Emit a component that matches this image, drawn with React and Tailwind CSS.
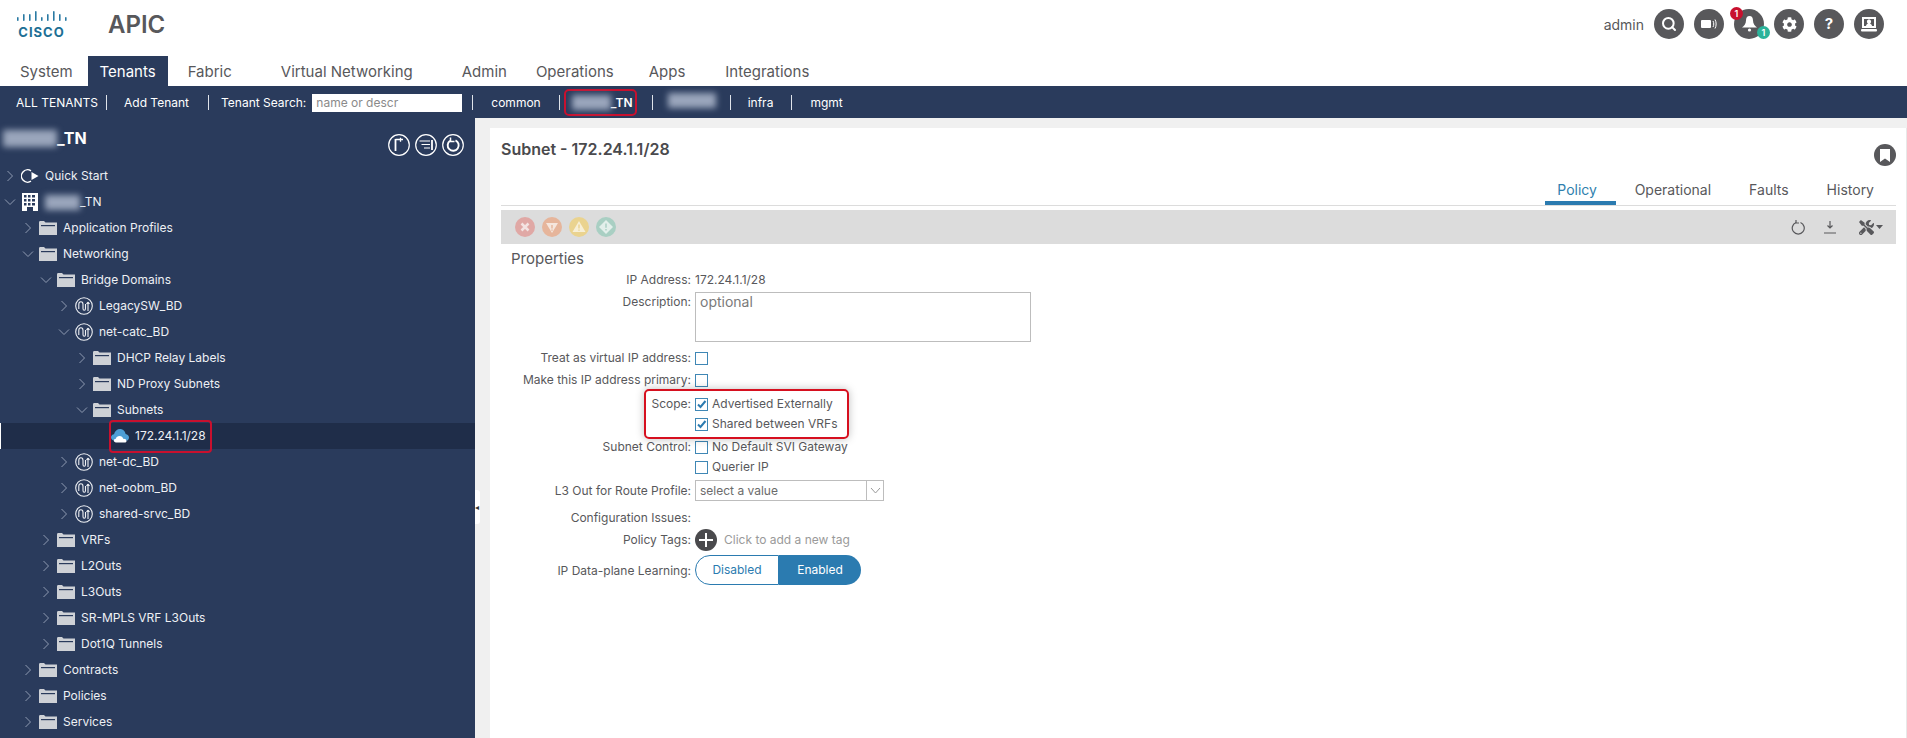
import React from "react";
import { Search } from "lucide-react";
import { FaCog, FaTools } from "react-icons/fa";

const font = { fontFamily: "Inter, sans-serif" };

const CiscoLogo = () => (
  <div className="flex flex-col items-center w-[53px] -mt-[7px]">
    <svg width="50" height="10" viewBox="0 0 50 10">
      {[[1,6,4],[7,3,7],[13,3,7],[19,0,10],[25,6,4],[31,3,7],[37,0,10],[43,3,7],[49,6,4]].map(([x, y, h], i) => (
        <rect key={i} x={x - 1} y={y} width="1.6" height={h} rx="0.8" fill="#2a7aa3" />
      ))}
    </svg>
    <span className="text-[13px] leading-[13px] font-bold tracking-[1px] text-[#1d6f95] mt-[5px]">CISCO</span>
  </div>
);

const HeaderCircle = ({ children, badge }) => (
  <div className="relative w-[30px] h-[30px] rounded-full bg-[#58585b] flex items-center justify-center text-white">
    {children}
    {badge}
  </div>
);

const Sep = () => <span className="block w-[1px] h-[15px] bg-[#dfe3ea]" />;

const Blur = ({ className }) => <span className={`inline-block h-[15px] bg-[#9aa6bc] blur-[3px] ${className}`} />;

const Chevron = ({ open }) => (
  <svg width="12" height="12" viewBox="0 0 12 12" fill="none" stroke="#8f9bb2" strokeWidth="1">
    {open ? <path d="M1 3.5 6 8.500 11 3.500" /> : <path d="M3.500 1 8.500 6 3.500 11" />}
  </svg>
);

const Folder = () => (
  <svg width="18" height="14" viewBox="0 0 18 14">
    <path d="M0 1.500C0 .7.5 0 1.200 0H5l1.500 1.500H18V14H0Z" fill="#ced1d6" />
    <rect x="2" y="4" width="14" height="1.200" fill="#2a3b5c" />
  </svg>
);

const BdIcon = () => (
  <svg width="18" height="18" viewBox="0 0 18 18" fill="none" stroke="#eef0f4" strokeWidth="1.100">
    <circle cx="9" cy="9" r="8.300" />
    <path d="M3.800 12V7.500C3.800 3.800 8 3.800 8 7.500V11.500C8 13.800 10.500 13.800 10.500 11.500V7" />
    <path d="M13 14V5M13 5l-1.500 2M13 5l1.500 2" />
  </svg>
);

const CloudIcon = () => (
  <svg width="18" height="14" viewBox="0 0 18 14">
    <path d="M3.500 11.500C1.200 11.500 0 9.900 0 8.300 0 6.600 1.300 5.300 3 5.200 3.800 2 6.200 0 9 0c3 0 5.200 2.200 5.600 5 2 .2 3.400 1.700 3.400 3.500 0 1.200-.6 2.200-1.500 3Z" fill="#4d9ed6" />
    <path d="M5 13.500c-1.300 0-2.200-.8-2.200-1.900 0-1 .9-1.900 2-1.900.5-1.600 1.900-2.700 3.700-2.700 1.900 0 3.400 1.200 3.800 2.900 1.500-.2 3.200.6 3.200 2 0 .9-.8 1.600-2 1.600Z" fill="#fff" />
  </svg>
);

const BuildingIcon = () => (
  <svg width="16" height="18" viewBox="0 0 16 18">
    <path fillRule="evenodd" fill="#fff" d="M0 0h16v18h-5v-4H5v4H0ZM2 2v2.500h2.500V2Zm4 0v2.500h2.500V2Zm4 0v2.500h3V2ZM2 6v2.500h2.500V6Zm4 0v2.500h2.500V6Zm4 0v2.500h3V6ZM2 10v2.500h2.500V10Zm4 0v2.500h2.500V10Zm4 0v2.500h3V10Z" />
  </svg>
);

const QuickIcon = () => (
  <svg width="18" height="14" viewBox="0 0 18 14" fill="none">
    <path d="M10 1.800A6.200 6.200 0 1 0 10 12.200" stroke="#fff" strokeWidth="1.400" />
    <path d="M10.500 3 17.500 7 10.500 11Z" fill="#fff" />
  </svg>
);

const TREE = [
  { level: 0, label: "Quick Start", icon: "quick", chev: "closed" },
  { level: 0, label: "_TN", icon: "tenant", chev: "open", blur: true },
  { level: 1, label: "Application Profiles", icon: "folder", chev: "closed" },
  { level: 1, label: "Networking", icon: "folder", chev: "open" },
  { level: 2, label: "Bridge Domains", icon: "folder", chev: "open" },
  { level: 3, label: "LegacySW_BD", icon: "bd", chev: "closed" },
  { level: 3, label: "net-catc_BD", icon: "bd", chev: "open" },
  { level: 4, label: "DHCP Relay Labels", icon: "folder", chev: "closed" },
  { level: 4, label: "ND Proxy Subnets", icon: "folder", chev: "closed" },
  { level: 4, label: "Subnets", icon: "folder", chev: "open" },
  { level: 5, label: "172.24.1.1/28", icon: "cloud", selected: true },
  { level: 3, label: "net-dc_BD", icon: "bd", chev: "closed" },
  { level: 3, label: "net-oobm_BD", icon: "bd", chev: "closed" },
  { level: 3, label: "shared-srvc_BD", icon: "bd", chev: "closed" },
  { level: 2, label: "VRFs", icon: "folder", chev: "closed" },
  { level: 2, label: "L2Outs", icon: "folder", chev: "closed" },
  { level: 2, label: "L3Outs", icon: "folder", chev: "closed" },
  { level: 2, label: "SR-MPLS VRF L3Outs", icon: "folder", chev: "closed" },
  { level: 2, label: "Dot1Q Tunnels", icon: "folder", chev: "closed" },
  { level: 1, label: "Contracts", icon: "folder", chev: "closed" },
  { level: 1, label: "Policies", icon: "folder", chev: "closed" },
  { level: 1, label: "Services", icon: "folder", chev: "closed" },
];

const INDENT = ["pl-[4px]", "pl-[22px]", "pl-[40px]", "pl-[58px]", "pl-[76px]", "pl-[94px]"];

const TreeRow = ({ row }) => (
  <div className={`relative flex items-center h-[26px] shrink-0 ${INDENT[row.level]} ${row.selected ? "bg-[#1f2d49]" : ""}`}>
    {row.selected && <span className="absolute left-0 top-0 w-[1px] h-full bg-white" />}
    <span className="w-[12px] flex justify-center mr-[5px]">{row.chev && <Chevron open={row.chev === "open"} />}</span>
    <span className="w-[18px] flex justify-center mr-[6px]">
      {row.icon === "folder" && <Folder />}
      {row.icon === "bd" && <BdIcon />}
      {row.icon === "cloud" && <CloudIcon />}
      {row.icon === "tenant" && <BuildingIcon />}
      {row.icon === "quick" && <QuickIcon />}
    </span>
    {row.blur && <Blur className="w-[35px]" />}
    <span className="text-[12px] text-[#eef0f4]">{row.label}</span>
    {row.selected && <span className="absolute left-[109px] top-[-3px] w-[103px] h-[33px] border-2 border-[#c8102e] rounded-[4px]" />}
  </div>
);

const Row = ({ label, className, children, labelClass = "" }) => (
  <div className={`flex ${className}`}>
    <span className={`w-[180px] text-right text-[12px] leading-[20px] text-[#58585b] shrink-0 mr-[4px] ${labelClass}`}>{label}</span>
    {children}
  </div>
);

const Check = ({ on }) => (
  <span className="w-[13px] h-[13px] border border-[#3f87b5] bg-white flex items-center justify-center shrink-0">
    {on && (
      <svg width="11" height="11" viewBox="0 0 11 11" fill="none" stroke="#2b7bb0" strokeWidth="2">
        <path d="M2 5.500 4.500 8 9.500 2" />
      </svg>
    )}
  </span>
);

const CheckLine = ({ on, label }) => (
  <div className="flex items-center h-[20px] text-[12px] text-[#58585b]">
    <Check on={on} />
    <span className="ml-[4px]">{label}</span>
  </div>
);

const FaultIcon = ({ color, children }) => (
  <svg width="20" height="20" viewBox="0 0 20 20">
    <circle cx="10" cy="10" r="10" fill={color} />
    {children}
  </svg>
);

const TreeButton = ({ children }) => (
  <svg width="22" height="22" viewBox="0 0 22 22" fill="none" stroke="#fff" strokeWidth="1.200">
    <circle cx="11" cy="11" r="10.300" />
    {children}
  </svg>
);

const NAV_TABS = [
  { label: "System", cls: "ml-[20px]" },
  { label: "Tenants", cls: "ml-[15px] w-[80px] justify-center bg-[#2a3b5c] text-white" },
  { label: "Fabric", cls: "ml-[20px]" },
  { label: "Virtual Networking", cls: "ml-[49px]" },
  { label: "Admin", cls: "ml-[49px]" },
  { label: "Operations", cls: "ml-[29px]" },
  { label: "Apps", cls: "ml-[35px]" },
  { label: "Integrations", cls: "ml-[40px]" },
];

export default function App() {
  return (
    <div className="w-[1907px] h-[738px] overflow-hidden flex flex-col bg-[#f0f0f0] text-[#58585b]" style={font}>
      {/* top header */}
      <div className="h-[56px] bg-white flex items-center shrink-0 pl-[15px] pr-[23px]">
        <CiscoLogo />
        <span className="ml-[40px] text-[24px] font-semibold text-[#58585b] -mt-[6px]">APIC</span>
        <span className="ml-auto text-[14px] mr-[10px] -mt-[8px]">admin</span>
        <div className="flex gap-[10px] -mt-[8px]">
          <HeaderCircle><Search size={16} strokeWidth={3} /></HeaderCircle>
          <HeaderCircle>
            <svg width="16" height="12" viewBox="0 0 16 12" fill="#fff"><rect x="0" y="2" width="10" height="8" rx="1" /><path d="M12 3c1 1.500 1 4.500 0 6M14 1.500c1.500 2.500 1.500 6.500 0 9" stroke="#fff" fill="none" /></svg>
          </HeaderCircle>
          <HeaderCircle
            badge={
              <>
                <span className="absolute -top-[2px] -left-[4px] w-[13px] h-[13px] rounded-full bg-[#c8102e] text-[9px] leading-[13px] text-center font-semibold">1</span>
                <span className="absolute bottom-[0px] -right-[6px] w-[13px] h-[13px] rounded-full bg-[#2bb39a] text-[9px] leading-[13px] text-center font-semibold">1</span>
              </>
            }
          >
            <svg width="15" height="16" viewBox="0 0 15 16" fill="#fff"><path d="M7.500 0C10 0 11 2 11 4.500 11 8 13 10 15 11.500H0C2 10 4 8 4 4.500 4 2 5 0 7.500 0Z" /><circle cx="7.500" cy="14" r="1.600" /></svg>
          </HeaderCircle>
          <HeaderCircle><FaCog size={15} /></HeaderCircle>
          <HeaderCircle><span className="text-[15px] font-bold">?</span></HeaderCircle>
          <HeaderCircle>
            <svg width="16" height="15" viewBox="0 0 16 15" fill="#fff"><path fillRule="evenodd" d="M1 0h14v11H1ZM3 2v7h2c0-1 1-2 2-2.500C6 6 5.800 5 6 4c.3-1 1-1.500 2-1.500S9.700 3 10 4c.2 1 0 2-1 2.500 1 .5 2 1.500 2 2.500h2V2Z" /><rect x="0" y="12" width="16" height="2.500" rx="1" /></svg>
          </HeaderCircle>
        </div>
      </div>

      {/* main tabs */}
      <div className="h-[30px] bg-white flex shrink-0 text-[15px]">
        {NAV_TABS.map((t) => (
          <div key={t.label} className={`flex items-center h-full pt-[3px] ${t.cls}`}>{t.label}</div>
        ))}
      </div>

      {/* tenant bar */}
      <div className="h-[32px] bg-[#2a3b5c] text-white text-[12px] flex items-center shrink-0 pl-[16px] pt-[1px]">
        <span>ALL TENANTS</span>
        <span className="ml-[8px]"><Sep /></span>
        <span className="ml-[17px]">Add Tenant</span>
        <span className="ml-[19px]"><Sep /></span>
        <span className="ml-[12px]">Tenant Search:</span>
        <input placeholder="name or descr" className="ml-[6px] w-[150px] h-[18px] bg-white px-[4px] text-[12px] placeholder:text-[#8a8a8a]" />
        <span className="ml-[10px]"><Sep /></span>
        <span className="ml-[18px]">common</span>
        <span className="ml-[18px]"><Sep /></span>
        <div className="relative ml-[4px] w-[73px] h-[27px] border-2 border-[#c8102e] rounded-[5px] flex items-center pl-[6px] font-semibold">
          <Blur className="w-[39px]" />
          <span>_TN</span>
        </div>
        <span className="ml-[15px]"><Sep /></span>
        <span className="ml-[15px]"><Blur className="w-[48px]" /></span>
        <span className="ml-[14px]"><Sep /></span>
        <span className="ml-[17px]">infra</span>
        <span className="ml-[18px]"><Sep /></span>
        <span className="ml-[18px]">mgmt</span>
      </div>

      <div className="flex-1 flex min-h-0">
        {/* left tree panel */}
        <div className="relative w-[475px] bg-[#2a3b5c] shrink-0 flex flex-col">
          <div className="h-[47px] flex items-start justify-between shrink-0 pl-[3px] pr-[11px]">
            <div className="flex items-center h-[40px] text-[16px] font-bold text-white">
              <Blur className="w-[54px] h-[17px]" />
              <span>_TN</span>
            </div>
            <div className="flex gap-[5px] mt-[16px]">
              <TreeButton><path d="M7.500 5V17" strokeWidth="1.800" /><path d="M7.500 5.500H15M12.500 3.800V7.800" strokeWidth="1.300" /></TreeButton>
              <TreeButton><path d="M4.500 7H15M6.500 10.500H15M9 14H15" /><path d="M17 6V16" strokeWidth="1.800" /></TreeButton>
              <TreeButton><path d="M8 6.800A5.500 5.500 0 1 0 13.500 6.300" strokeWidth="1.900" /><path d="M8.500 3.500V7.500H12.500" strokeWidth="1.500" /></TreeButton>
            </div>
          </div>
          <div className="flex flex-col mt-[-2px]">
            {TREE.map((row, i) => <TreeRow key={i} row={row} />)}
          </div>
          <span className="absolute right-[-5px] top-[372px] w-[5px] h-[34px] bg-white rounded-r-[3px] text-[8px] leading-[34px] text-[#333]">◂</span>
        </div>

        {/* right panel */}
        <div className="flex-1 flex flex-col bg-white ml-[15px] mt-[10px] pl-[11px] pr-[10px] border-r border-[#e8e8e8] min-w-0">
          <div className="relative h-[78px] border-b border-[#dcdcdc] shrink-0">
            <div className="text-[16px] font-semibold text-[#4a4a4d] pt-[9px]">Subnet - 172.24.1.1/28</div>
            <span className="absolute right-0 top-[16px] w-[22px] h-[22px] rounded-full bg-[#58585b] flex items-center justify-center">
              <svg width="10" height="13" viewBox="0 0 10 13" fill="#fff"><path d="M0 0h10v13L5 9.500 0 13Z" /></svg>
            </span>
            <div className="absolute right-[22px] bottom-0 flex text-[14px] leading-[20px]">
              <span className="w-[71px] h-[31px] pt-[6px] pr-[6px] text-center text-[#2f7fae] border-b-[4px] border-[#2b7bb0]">Policy</span>
              <span className="ml-[19px] h-[31px] pt-[6px]">Operational</span>
              <span className="ml-[38px] h-[31px] pt-[6px]">Faults</span>
              <span className="ml-[38px] h-[31px] pt-[6px]">History</span>
            </div>
          </div>
          <div className="mt-[4px] h-[34px] bg-[#dcdcdc] flex items-center shrink-0 pl-[14px] pr-[13px]">
            <div className="flex gap-[7px]">
              <FaultIcon color="#e0a8a5"><path d="M6.500 6.500 13.500 13.500M13.500 6.500 6.500 13.500" stroke="#f3e3e2" strokeWidth="2.500" /></FaultIcon>
              <FaultIcon color="#e6b59b"><path d="M4 6H16L10 16Z" fill="#f5e6dd" /><path d="M10 8V11.500M10 12.500V13.800" stroke="#e6b59b" strokeWidth="1.400" /></FaultIcon>
              <FaultIcon color="#ead38f"><path d="M10 4 16.500 15H3.500Z" fill="#f7efd6" /><path d="M10 7.500V11.500M10 12.500V13.800" stroke="#ead38f" strokeWidth="1.400" /></FaultIcon>
              <FaultIcon color="#a9cfc3"><path d="M10 3 17 10 10 17 3 10Z" fill="#e3efeb" /><path d="M10 6.500V10.800M10 12V13.500" stroke="#a9cfc3" strokeWidth="1.400" /></FaultIcon>
            </div>
            <div className="ml-auto flex items-center">
              <svg width="14" height="15" viewBox="0 0 14 15" fill="none" stroke="#58585b" strokeWidth="1.200"><path d="M5 2.500A6 6 0 1 0 9.500 2.500" /><path d="M5 0V3H8" /></svg>
              <svg className="ml-[18px]" width="14" height="14" viewBox="0 0 14 14" fill="none" stroke="#58585b" strokeWidth="1.200"><path d="M7 1V8M4.500 5.500 7 8 9.500 5.500M1 13H13" /></svg>
              <span className="ml-[22px] flex items-center gap-[2px]">
                <FaTools size={15} color="#58585b" />
                <svg width="7" height="4" viewBox="0 0 7 4" fill="#58585b"><path d="M0 0h7L3.500 4Z" /></svg>
              </span>
            </div>
          </div>

          {/* properties form */}
          <div className="flex flex-col pl-[10px]">
            <div className="mt-[5px] h-[20px] text-[15px] leading-[20px]">Properties</div>
            <Row label="IP Address:" className="mt-[1px] h-[20px]"><span className="text-[12px] leading-[20px]">172.24.1.1/28</span></Row>
            <Row label="Description:" className="mt-[2px]">
              <textarea placeholder="optional" className="w-[336px] h-[50px] border border-[#bdbdbd] px-[4px] text-[14px] leading-[18px] resize-none placeholder:text-[#7a7a7a]" />
            </Row>
            <Row label="Treat as virtual IP address:" className="mt-[6px] h-[20px] items-center"><Check /></Row>
            <Row label="Make this IP address primary:" className="mt-[2px] h-[20px] items-center"><Check /></Row>
            <div className="relative">
              <Row label="Scope:" className="mt-[4px]">
                <div className="flex flex-col">
                  <CheckLine on label="Advertised Externally" />
                  <CheckLine on label="Shared between VRFs" />
                </div>
              </Row>
              <span className="absolute left-[133px] top-[-1px] w-[205px] h-[50px] border-2 border-[#d6101f] rounded-[5px] shadow-[0_0_8px_rgba(0,0,0,0.25)]" />
            </div>
            <Row label="Subnet Control:" className="mt-[3px]">
              <div className="flex flex-col">
                <CheckLine label="No Default SVI Gateway" />
                <CheckLine label="Querier IP" />
              </div>
            </Row>
            <Row label="L3 Out for Route Profile:" className="mt-[3px] h-[21px] items-center">
              <div className="w-[189px] h-[21px] border border-[#bdbdbd] flex items-center text-[12px] text-[#6b6b6b]">
                <span className="flex-1 px-[4px]">select a value</span>
                <span className="w-[17px] h-full border-l border-[#bdbdbd] flex items-center justify-center">
                  <svg width="11" height="7" viewBox="0 0 11 7" fill="none" stroke="#9a9a9a"><path d="M1 1 5.500 6 10 1" /></svg>
                </span>
              </div>
            </Row>
            <Row label="Configuration Issues:" className="mt-[7px] h-[20px]" />
            <Row label="Policy Tags:" className="mt-[1px] h-[22px] items-center">
              <span className="w-[22px] h-[22px] rounded-full bg-[#4a4a4d] flex items-center justify-center">
                <svg width="14" height="14" viewBox="0 0 14 14" stroke="#fff" strokeWidth="2"><path d="M7 0V14M0 7H14" /></svg>
              </span>
              <span className="ml-[7px] text-[12px] text-[#9a9a9a]">Click to add a new tag</span>
            </Row>
            <Row label="IP Data-plane Learning:" labelClass="pt-[2px]" className="mt-[4px] h-[30px] items-center">
              <div className="flex w-[166px] h-[30px] text-[12px]">
                <span className="w-[84px] border border-[#2b7bb0] rounded-l-full text-[#2b7bb0] flex items-center justify-center">Disabled</span>
                <span className="w-[82px] bg-[#2b7bb0] rounded-r-full text-white flex items-center justify-center">Enabled</span>
              </div>
            </Row>
          </div>
        </div>
      </div>
    </div>
  );
}
